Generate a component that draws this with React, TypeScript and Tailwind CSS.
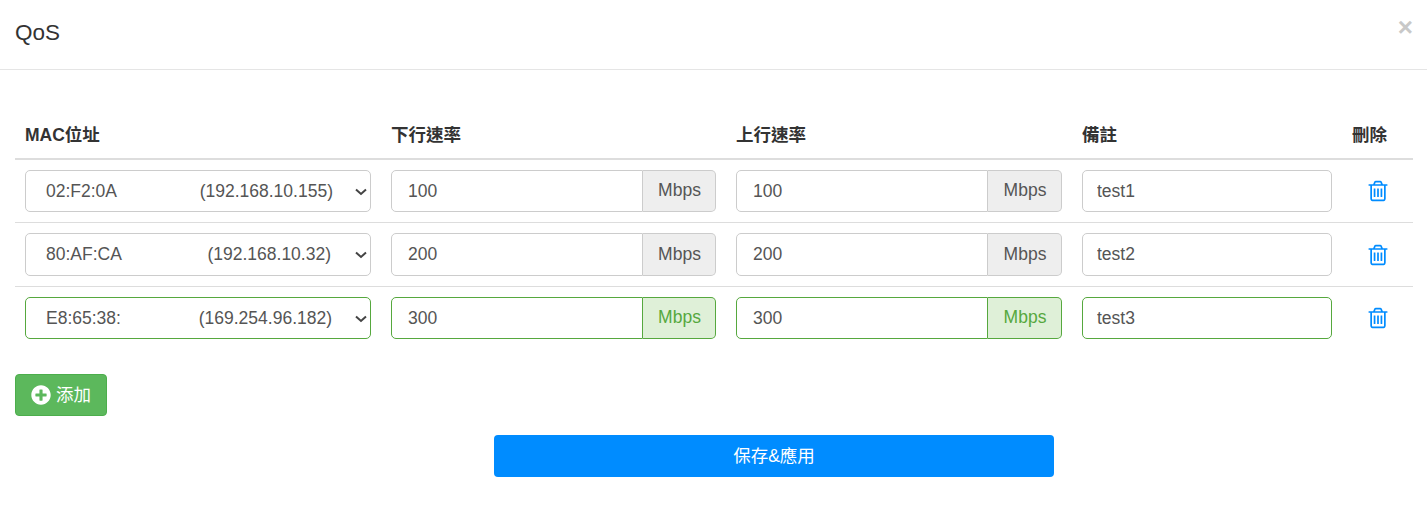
import { FaPlusCircle } from "react-icons/fa";

const NB = "\u00a0";

interface QosRow {
  mac: string;
  gap: string;
  ip: string;
  down: string;
  up: string;
  note: string;
  valid?: boolean;
}

const rows: QosRow[] = [
  { mac: "02:F2:0A", gap: NB.repeat(17), ip: "(192.168.10.155)", down: "100", up: "100", note: "test1" },
  { mac: "80:AF:CA", gap: NB.repeat(17) + "\u2006", ip: "(192.168.10.32)", down: "200", up: "200", note: "test2" },
  { mac: "E8:65:38:", gap: NB.repeat(16), ip: "(169.254.96.182)", down: "300", up: "300", note: "test3", valid: true },
];

function TrashIcon() {
  return (
    <svg viewBox="0 0 1792 1792" fill="currentColor" className="h-[24px] w-[24px]">
      <path d="M704 736v576q0 14-9 23t-23 9h-64q-14 0-23-9t-9-23v-576q0-14 9-23t23-9h64q14 0 23 9t9 23zm256 0v576q0 14-9 23t-23 9h-64q-14 0-23-9t-9-23v-576q0-14 9-23t23-9h64q14 0 23 9t9 23zm256 0v576q0 14-9 23t-23 9h-64q-14 0-23-9t-9-23v-576q0-14 9-23t23-9h64q14 0 23 9t9 23zm128 724v-948h-896v948q0 22 7 40.5t14.5 27 10.5 8.5h832q3 0 10.5-8.5t14.5-27 7-40.5zm-672-1076h448l-48-117q-7-9-17-11h-317q-10 2-17 11zm928 32v64q0 14-9 23t-23 9h-96v948q0 83-47 143.5t-113 60.5h-832q-66 0-113-58.5t-47-141.5v-952h-96q-14 0-23-9t-9-23v-64q0-14 9-23t23-9h309l70-167q15-37 54-63t79-26h320q40 0 79 26t54 63l70 167h309q14 0 23 9t9 23z" />
    </svg>
  );
}

function RateInput({ value, valid, addonClass }: { value: string; valid?: boolean; addonClass: string }) {
  return (
    <div className="flex h-[42.5px]">
      <input
        readOnly
        value={value}
        className={`h-full min-w-0 flex-1 rounded-l-[5px] border bg-white px-4 text-[17.5px] text-[#555] outline-none ${
          valid ? "border-[#56a83e]" : "border-[#ccc]"
        }`}
      />
      <span
        className={`flex items-center justify-center rounded-r-[5px] border border-l-0 pb-px pl-px text-[17.5px] ${addonClass} ${
          valid ? "border-[#56a83e] bg-[#dff0d8] text-[#56a83e]" : "border-[#ccc] bg-[#eee] text-[#555]"
        }`}
      >
        Mbps
      </span>
    </div>
  );
}

export default function App() {
  return (
    <div className="h-[510px] bg-white font-['Liberation_Sans','Noto_Sans_CJK_TC',sans-serif] text-[#333]">
      <header className="flex h-[70px] items-start justify-between border-b border-[#e5e5e5] pl-[15px] pr-[14px]">
        <h4 className="mt-[19px] text-[22.5px] leading-[28px] text-[#333]">QoS</h4>
        <button type="button" className="mt-[12px] text-[26px] font-bold leading-[30px] text-[#c8c8c8]">
          ×
        </button>
      </header>

      <div className="px-[15px] pt-[40px]">
        <table className="w-[1398px] table-fixed border-collapse">
          <colgroup>
            <col className="w-[366px]" />
            <col className="w-[345px]" />
            <col className="w-[346px]" />
            <col className="w-[270px]" />
            <col className="w-[71px]" />
          </colgroup>
          <thead>
            <tr className="h-[49px] border-b-2 border-[#ddd] text-left text-[17.5px] font-bold">
              <th className="pl-[10px] pt-[2px]">MAC位址</th>
              <th className="pl-[10px] pt-[2px]">下行速率</th>
              <th className="pl-[10px] pt-[2px]">上行速率</th>
              <th className="pl-[10px] pt-[2px]">備註</th>
              <th className="pl-[10px] pt-[2px]">刪除</th>
            </tr>
          </thead>
          <tbody>
            {rows.map((row) => (
              <tr key={row.note} className="h-[63.5px] border-b border-[#ddd] last:border-b-0">
                <td className="px-[10px]">
                  <div className="relative">
                    <select
                      defaultValue={row.mac}
                      className={`block h-[42.5px] w-full appearance-none rounded-[5px] border bg-white px-5 text-[17.5px] text-[#555] outline-none ${
                        row.valid ? "border-[#56a83e]" : "border-[#ccc]"
                      }`}
                    >
                      <option value={row.mac}>{row.mac + row.gap + row.ip}</option>
                    </select>
                    <svg
                      viewBox="0 0 12 8"
                      fill="none"
                      stroke="#444"
                      strokeWidth="2"
                      className="pointer-events-none absolute right-[4px] top-[18px] h-[8px] w-[12px]"
                    >
                      <path d="M1 1.5l5 4.5 5-4.5" />
                    </svg>
                  </div>
                </td>
                <td className="px-[10px]">
                  <RateInput value={row.down} valid={row.valid} addonClass="w-[73px]" />
                </td>
                <td className="px-[10px]">
                  <RateInput value={row.up} valid={row.valid} addonClass="w-[74px]" />
                </td>
                <td className="px-[10px]">
                  <input
                    readOnly
                    value={row.note}
                    className={`block h-[42.5px] w-full rounded-[5px] border bg-white pl-[14px] pr-4 text-[17.5px] text-[#555] outline-none ${
                      row.valid ? "border-[#56a83e]" : "border-[#ccc]"
                    }`}
                  />
                </td>
                <td className="text-center align-middle">
                  <button type="button" className="inline-flex align-middle text-[#008cff]">
                    <TrashIcon />
                  </button>
                </td>
              </tr>
            ))}
          </tbody>
        </table>

        <button
          type="button"
          className="mt-[24px] flex h-[42px] w-[92px] items-center justify-center gap-[5px] rounded-[4px] border border-[#4cae4c] bg-[#5cb85c] pt-px text-[17.5px] text-white"
        >
          <FaPlusCircle className="h-[20px] w-[20px]" />
          添加
        </button>

        <div className="mt-[19px] flex justify-center">
          <button
            type="button"
            className="ml-[121px] h-[42px] w-[560px] rounded-[4px] bg-[#008cff] pt-[2px] text-[17.5px] text-white"
          >
            保存&amp;應用
          </button>
        </div>
      </div>
    </div>
  );
}
